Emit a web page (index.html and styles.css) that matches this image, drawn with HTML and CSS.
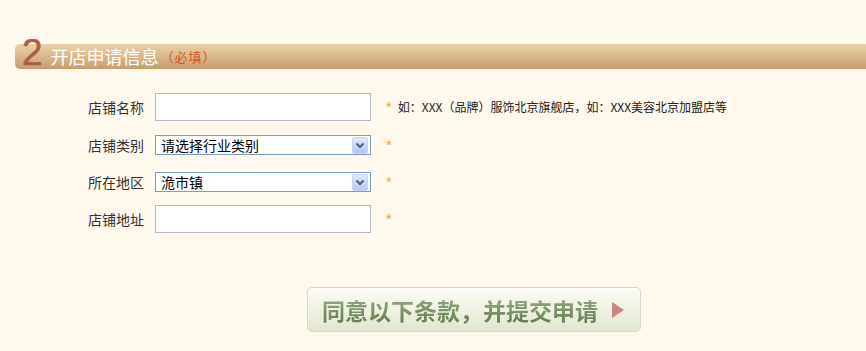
FILE: index.html
```html
<!DOCTYPE html>
<html lang="zh-CN">
<head>
<meta charset="utf-8">
<title>开店申请信息</title>
<link rel="stylesheet" href="styles.css">
</head>
<body>
<div class="page">
  <div class="section-head">
    <span class="num">2</span>
    <span class="title">开店申请信息</span>
    <span class="req">（必填）</span>
  </div>

  <div class="form">
    <div class="row row-1">
      <label class="label">店铺名称</label>
      <input class="text-input" type="text">
      <span class="star">*</span>
      <span class="hint">如：XXX（品牌）服饰北京旗舰店，如：XXX美容北京加盟店等</span>
    </div>
    <div class="row row-2">
      <label class="label">店铺类别</label>
      <div class="select">
        <span class="select-text">请选择行业类别</span>
        <span class="select-btn">
          <svg width="14" height="15" viewBox="0 0 14 15"><path d="M3.5 5.5 L7 9 L10.5 5.5" fill="none" stroke="#4d6185" stroke-width="2.2"/></svg>
        </span>
      </div>
      <span class="star">*</span>
    </div>
    <div class="row row-3">
      <label class="label">所在地区</label>
      <div class="select">
        <span class="select-text">洈市镇</span>
        <span class="select-btn">
          <svg width="14" height="15" viewBox="0 0 14 15"><path d="M3.5 5.5 L7 9 L10.5 5.5" fill="none" stroke="#4d6185" stroke-width="2.2"/></svg>
        </span>
      </div>
      <span class="star">*</span>
    </div>
    <div class="row row-4">
      <label class="label">店铺地址</label>
      <input class="text-input" type="text">
      <span class="star">*</span>
    </div>
  </div>

  <div class="actions">
    <button class="submit" type="button">
      <span class="submit-text">同意以下条款，并提交申请</span>
      <span class="submit-arrow"></span>
    </button>
  </div>
</div>
</body>
</html>
```

FILE: styles.css
```css
html, body {
  margin: 0;
  padding: 0;
  background: #fef9ec;
}

.page {
  width: 866px;
  height: 351px;
  overflow: hidden;
  padding-top: 44px;
  box-sizing: border-box;
  font-family: "Noto Sans CJK SC", "Liberation Sans", sans-serif;
  color: #333;
}

.section-head {
  margin-left: 15px;
  height: 25px;
  display: flex;
  align-items: center;
  border-radius: 5px 0 0 5px;
  background: linear-gradient(#ead2a6, #c79d71);
}

.num {
  align-self: flex-start;
  margin-top: -10px;
  margin-left: 7px;
  font-family: "Liberation Sans", sans-serif;
  font-size: 37px;
  line-height: 37px;
  height: 37px;
  color: #ad5c46;
  -webkit-text-stroke: 0.6px #ad5c46;
}

.title {
  margin-left: 8px;
  font-size: 18px;
  line-height: 25px;
  color: #fff;
}

.req {
  margin-left: 2px;
  font-size: 13px;
  line-height: 25px;
  color: #d4541f;
  letter-spacing: 1px;
}

.form {
  margin-top: 24px;
  padding-left: 88px;
  display: flex;
  flex-direction: column;
}

.row {
  display: flex;
  align-items: center;
}

.row-1 { height: 28px; margin-bottom: 14px; }
.row-2 { height: 20px; margin-bottom: 17px; }
.row-3 { height: 20px; margin-bottom: 13px; }
.row-4 { height: 28px; }

.label {
  width: 67px;
  font-size: 14px;
  line-height: 20px;
  color: #333;
}

.text-input {
  box-sizing: border-box;
  width: 216px;
  height: 28px;
  margin: 0;
  padding: 0 4px;
  border: 1px solid #b4b7bd;
  background: #fff;
  outline: none;
}

.select {
  box-sizing: border-box;
  width: 216px;
  height: 20px;
  border: 1px solid #7f9db9;
  background: #fff;
  display: flex;
  align-items: center;
  justify-content: space-between;
  padding-left: 5px;
  padding-right: 2px;
}

.select-text {
  font-size: 14px;
  line-height: 18px;
  color: #000;
}

.select-btn {
  box-sizing: border-box;
  width: 16px;
  height: 17px;
  border: 1px solid #c6d5fa;
  border-radius: 2px;
  background: linear-gradient(#dfe8fd, #b6c9f5);
  display: flex;
  align-items: center;
  justify-content: center;
}

.star {
  margin-left: 15px;
  font-family: "Liberation Sans", sans-serif;
  font-size: 15px;
  line-height: 20px;
  color: #f0a73a;
}

.hint {
  margin-left: 6px;
  font-size: 12px;
  line-height: 18px;
  color: #222;
}

.actions {
  margin-top: 54px;
  padding-left: 307px;
}

.submit {
  box-sizing: border-box;
  width: 334px;
  height: 45px;
  margin: 0;
  padding: 0 0 0 14px;
  border: 1px solid #d6d7c2;
  border-radius: 5px;
  background: linear-gradient(#fcfcf5, #e2e6cf);
  box-shadow: inset 0 1px 0 #fff;
  display: flex;
  align-items: center;
  cursor: pointer;
  font-family: "Noto Sans CJK SC", "Liberation Sans", sans-serif;
}

.submit-text {
  font-size: 23px;
  font-weight: bold;
  line-height: 30px;
  color: #6f8c5c;
  background: linear-gradient(#98ae86, #5f7b4d);
  -webkit-background-clip: text;
  background-clip: text;
  -webkit-text-fill-color: transparent;
}

.submit-arrow {
  margin-left: 14px;
  width: 0;
  height: 0;
  border-left: 12px solid #c7877f;
  border-top: 8.5px solid transparent;
  border-bottom: 8.5px solid transparent;
}
```
